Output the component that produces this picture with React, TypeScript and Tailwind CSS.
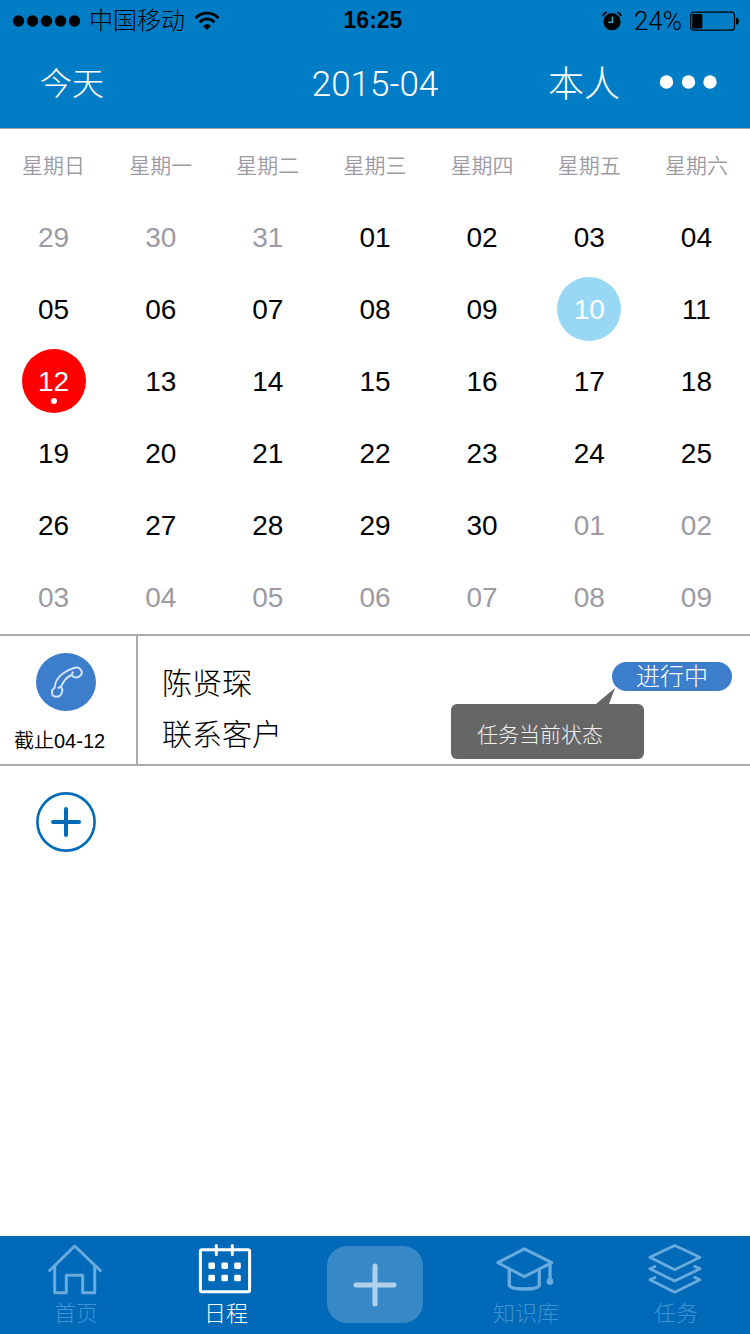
import React from "react";

type Day = { label: string; muted?: boolean; state?: "selected" | "today" };

const weekdays = ["星期日", "星期一", "星期二", "星期三", "星期四", "星期五", "星期六"];

const pad = (n: number) => String(n).padStart(2, "0");

function buildWeeks(): Day[][] {
  const days: Day[] = [];
  for (let d = 29; d <= 31; d++) days.push({ label: pad(d), muted: true });
  for (let d = 1; d <= 30; d++) {
    days.push({ label: pad(d), state: d === 10 ? "today" : d === 12 ? "selected" : undefined });
  }
  for (let d = 1; d <= 9; d++) days.push({ label: pad(d), muted: true });
  return Array.from({ length: 6 }, (_, i) => days.slice(i * 7, i * 7 + 7));
}

const weeks = buildWeeks();

function StatusBar() {
  return (
    <div className="grid h-10 grid-cols-[1fr_auto_1fr] items-center pt-px text-black">
      <div className="flex items-center pl-3">
        <svg width="70" height="14" viewBox="0 0 70 14" aria-hidden="true">
          {[6.5, 20.5, 34.5, 48.5, 62.5].map((x) => (
            <circle key={x} cx={x} cy="7" r="5.7" />
          ))}
        </svg>
        <span className="ml-[7px] text-2xl leading-none font-light">中国移动</span>
        <svg className="ml-[9px]" width="26" height="20" viewBox="0 0 26 20" fill="none" stroke="currentColor" strokeWidth="2.8" aria-hidden="true">
          <path d="M1.5 7 C8 0.4 18 0.4 24.5 7" />
          <path d="M5.6 11.2 C10 6.8 16 6.8 20.4 11.2" />
          <path d="M13 19 L9 15 C11.2 12.8 14.8 12.8 17 15 Z" fill="currentColor" stroke="none" />
        </svg>
      </div>
      <span className="pr-1 text-[23px] font-bold leading-none">16:25</span>
      <div className="flex items-center justify-end pr-[10px]">
        <svg width="20" height="20" viewBox="0 0 20 20" aria-hidden="true">
          <circle cx="10" cy="10.7" r="8.6" />
          <path d="M1 5.2 Q1.5 2 5 1.3 M19 5.2 Q18.5 2 15 1.3" fill="none" stroke="currentColor" strokeWidth="1.6" />
          <path d="M10.5 5.5 V11.2 H6.4" fill="none" stroke="#4ba4dc" strokeWidth="1.6" />
        </svg>
        <span className="ml-3 font-['Roboto','Liberation_Sans',sans-serif] text-[26px] font-light leading-none">24%</span>
        <svg className="ml-2" width="50" height="20" viewBox="0 0 50 20" aria-hidden="true">
          <rect x="0.7" y="1.2" width="43.8" height="18" rx="3" fill="none" stroke="currentColor" strokeWidth="1.2" />
          <rect x="2.3" y="3" width="10" height="14.5" rx="1" />
          <path d="M46 6.8 Q49 7.4 49 10.2 Q49 13 46 13.6 Z" />
        </svg>
      </div>
    </div>
  );
}

function Header() {
  return (
    <header className="border-b border-[#9aa5ad] bg-[#007dc5] font-light">
      <StatusBar />
      <div className="grid h-[88px] grid-cols-[1fr_auto_1fr] items-center text-white">
        <button type="button" className="ml-10 justify-self-start text-[32px] leading-none">今天</button>
        <h1 className="font-['Roboto','Liberation_Sans',sans-serif] text-[35px] font-light leading-none">2015-04</h1>
        <div className="flex items-center justify-end">
          <button type="button" className="pt-[2px] text-4xl leading-none">本人</button>
          <button type="button" aria-label="更多" className="mr-8 ml-[38px] pb-1">
            <svg width="60" height="14" viewBox="0 0 60 14" fill="currentColor">
              <circle cx="8.5" cy="7" r="6.7" />
              <circle cx="30.5" cy="7" r="6.7" />
              <circle cx="52" cy="7" r="6.7" />
            </svg>
          </button>
        </div>
      </div>
    </header>
  );
}

function DayCell({ day }: { day: Day }) {
  const base = "relative mx-auto flex h-16 w-16 items-center justify-center rounded-full pt-[2px] text-[28px] leading-none font-normal ";
  const tone =
    day.state === "selected"
      ? "bg-[#ff0000] text-white"
      : day.state === "today"
        ? "bg-[#99d8f4] text-white"
        : day.muted
          ? "text-[#9d9aa4]"
          : "text-black";
  return (
    <td className="h-[72px] p-0">
      <button type="button" className={base + tone}>
        {day.label}
        {day.state === "selected" && <span className="absolute bottom-[9px] left-1/2 h-[6px] w-[6px] -translate-x-1/2 rounded-full bg-white" />}
      </button>
    </td>
  );
}

function Calendar() {
  return (
    <table className="mb-px w-full table-fixed border-collapse">
      <thead>
        <tr>
          {weekdays.map((w) => (
            <th key={w} scope="col" className="h-[72px] p-0 text-center text-[21px] leading-none font-[350] text-[#9d9aa4]">
              {w}
            </th>
          ))}
        </tr>
      </thead>
      <tbody>
        {weeks.map((week, i) => (
          <tr key={i}>
            {week.map((d, j) => (
              <DayCell key={j} day={d} />
            ))}
          </tr>
        ))}
      </tbody>
    </table>
  );
}

function PhoneIcon() {
  return (
    <svg width="60" height="60" viewBox="0 0 60 60" aria-hidden="true">
      <ellipse cx="30" cy="30" rx="30" ry="29" fill="#3d7ecc" />
      <path
        d="M18.6 35.6 C19 29.6 22.4 24.8 27 21.5 C30.5 19 33 17.5 36.5 16.5 C39 15.2 41 15 43 16 C44.5 17 45 18 45.8 19.7 C46 22 45.3 23.3 43.5 24.3 C41.5 25.5 39.4 25.8 38 25.2 C36.8 24.7 37 23.2 35.4 23.2 C31.5 24.5 27.5 29 25 34.6 C24.8 36 26.6 36.2 26.4 38 C26 41.2 25 43.2 23 44.3 C21 44.9 19 44.7 17.3 43.8 C16 43 15.9 40.5 16 38.8 C16 37 18.2 37.3 18.6 35.6 Z M35.6 22.8 L37.2 19.6 M24.6 34.8 L21.6 36.2"
        fill="none"
        stroke="#d3e2f4"
        strokeWidth="2"
        strokeLinejoin="round"
      />
    </svg>
  );
}

function ScheduleItem() {
  return (
    <article className="flex h-[132px] border-y-2 border-[#aaaaaa]">
      <div className="flex w-[138px] flex-col border-r-2 border-[#aaaaaa] pt-4">
        <div className="pl-9">
          <PhoneIcon />
        </div>
        <p className="mt-4 pl-[14px] text-xl leading-[26px]">截止04-12</p>
      </div>
      <div className="flex flex-1 items-start justify-between pl-6 font-light">
        <div className="pt-[22px] text-[30px] leading-[51px]">
          <h2 className="font-light">陈贤琛</h2>
          <p>联系客户</p>
        </div>
        <div className="relative mt-[26px] mr-[18px]">
          <span className="flex h-[29px] w-[120px] items-center justify-center rounded-full bg-[#3d7ecc] pt-px text-2xl leading-none text-white">进行中</span>
          <div role="tooltip" className="absolute top-[42px] right-[88px] flex h-[55px] w-[193px] items-center rounded-md bg-[#666666] pt-[6px] pl-[26px] text-[21px] leading-none whitespace-nowrap text-[#f2f2f2]">
            任务当前状态
            <svg className="absolute right-7 bottom-full" width="20" height="16" viewBox="0 0 20 16" aria-hidden="true">
              <path d="M0 16 L19 0 L13 16 Z" fill="#666666" />
            </svg>
          </div>
        </div>
      </div>
    </article>
  );
}

function HomeIcon() {
  return (
    <>
      <path d="M2.7 27.5 L27.7 3 L53.3 27.5" />
      <path d="M7.7 23 V49.7 H19.3 V32.3 H35.7 V49.7 H47.7 V23" />
    </>
  );
}

function CalendarIcon() {
  return (
    <>
      <rect x="3.4" y="6.7" width="49.2" height="42" rx="1.5" />
      <path d="M19.3 2.5 V11.5 M35.3 2.5 V11.5" />
      {[14.7, 27.7, 40.5].map((x) =>
        [22.7, 35].map((y) => (
          <rect key={x + "-" + y} x={x - 3.3} y={y - 3.3} width="6.6" height="6.6" rx="1.4" fill="currentColor" stroke="none" />
        )),
      )}
    </>
  );
}

function CapIcon() {
  return (
    <>
      <path d="M27.3 5.8 L0.8 19.7 L27.3 33.7 L54.8 19.7 Z" />
      <path d="M12.3 27 V42 Q12.8 46 27.3 46 Q41.8 46 42.3 42 V27 M53 20 V37" strokeWidth="3.4" />
      <circle cx="53" cy="38.4" r="3.4" fill="currentColor" stroke="none" />
    </>
  );
}

function LayersIcon() {
  return (
    <g strokeWidth="2.8">
      <path d="M27.7 2.6 L2.9 14.3 L27.7 26.7 L53 14.3 Z" />
      <path d="M8 23.4 L2.9 25.8 L27.7 38 L53 25.8 L47.7 23.4" />
      <path d="M8 34.4 L2.9 36.8 L27.7 49.2 L53 36.8 L47.7 34.4" />
    </g>
  );
}

function NavItem({ label, active, children }: { label: string; active?: boolean; children: React.ReactNode }) {
  return (
    <a href="#" aria-current={active ? "page" : undefined} className={"flex flex-col items-center pt-[7px] " + (active ? "text-white" : "text-[#6aabde]")}>
      <svg className="overflow-visible" width="56" height="52" viewBox="0 0 56 52" fill="none" stroke="currentColor" strokeWidth="3" strokeLinecap="round" strokeLinejoin="round" aria-hidden="true">
        {children}
      </svg>
      <span className={"pl-[2px] text-[22px] leading-[38px] font-light " + (active ? "text-white" : "text-[#3f93d2]")}>{label}</span>
    </a>
  );
}

function TabBar() {
  return (
    <nav className="grid h-[98px] grid-cols-5 bg-[#0069b8]">
      <NavItem label="首页">
        <HomeIcon />
      </NavItem>
      <NavItem label="日程" active>
        <CalendarIcon />
      </NavItem>
      <div className="flex justify-center pt-[10px]">
        <button type="button" aria-label="新建" className="flex h-[77px] w-24 items-center justify-center rounded-[20px] bg-[#3688c7] text-[#b0d1e9]">
          <svg width="44" height="44" viewBox="0 0 44 44" fill="none" stroke="currentColor" strokeWidth="5" strokeLinecap="round">
            <path d="M22 3 V41 M3 22 H41" />
          </svg>
        </button>
      </div>
      <NavItem label="知识库">
        <CapIcon />
      </NavItem>
      <NavItem label="任务">
        <LayersIcon />
      </NavItem>
    </nav>
  );
}

export default function App() {
  return (
    <div className="flex min-h-screen flex-col bg-white font-['Liberation_Sans','Noto_Sans_CJK_SC',sans-serif] font-[350] text-black">
      <Header />
      <main className="flex-1">
        <Calendar />
        <ScheduleItem />
        <button type="button" aria-label="添加日程" className="mt-[26px] ml-9 block text-[#006cb8]">
          <svg width="60" height="60" viewBox="0 0 60 60" fill="none" stroke="currentColor">
            <circle cx="30" cy="30" r="28.6" strokeWidth="2.6" />
            <path d="M30 17 V43 M17 30 H43" strokeWidth="4" strokeLinecap="round" />
          </svg>
        </button>
      </main>
      <TabBar />
    </div>
  );
}
